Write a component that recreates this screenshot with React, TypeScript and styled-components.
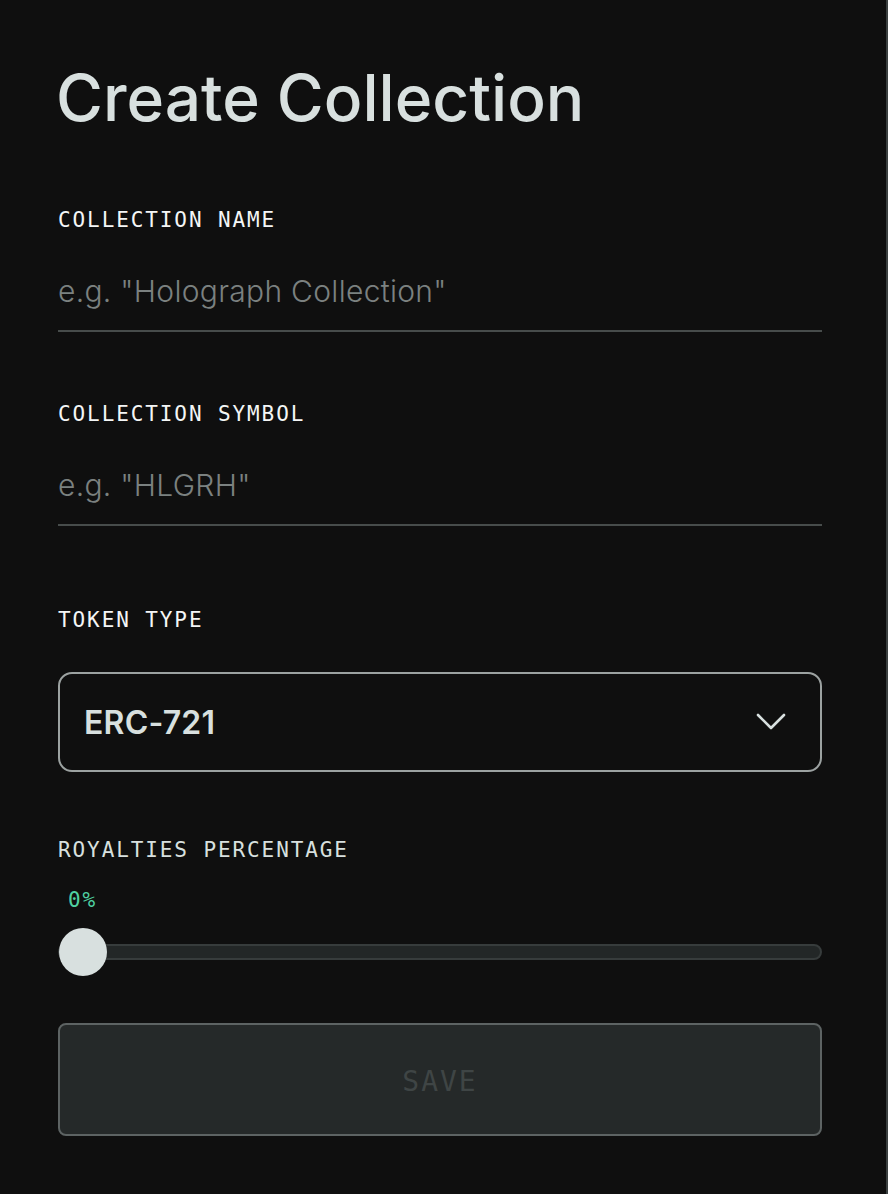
import React, { useState } from 'react'
import styled, { createGlobalStyle } from 'styled-components'

const GlobalStyle = createGlobalStyle`
  html, body {
    margin: 0;
    padding: 0;
    background: #0f0f0f;
  }
  * {
    box-sizing: border-box;
  }
`

const Page = styled.div`
  min-height: 1194px;
  background: #0f0f0f;
  border-right: 2px solid #3b4040;
  padding: 66px 64px 40px 58px;
  display: flex;
  flex-direction: column;
`

const Title = styled.h1`
  margin: 0 0 0 -2px;
  font-family: Inter, 'Liberation Sans', sans-serif;
  font-size: 64px;
  line-height: 64px;
  font-weight: 500;
  letter-spacing: 0;
  color: #d8e0df;
`

const Field = styled.div<{ $top: number }>`
  display: flex;
  flex-direction: column;
  margin-top: ${(p) => p.$top}px;
`

const Label = styled.label<{ $muted?: boolean }>`
  font-family: 'DejaVu Sans Mono', 'Liberation Mono', monospace;
  font-size: 21px;
  line-height: 24px;
  letter-spacing: 1.9px;
  color: ${(p) => (p.$muted ? '#d8e0df' : '#f4f6f6')};
`

const TextInput = styled.input`
  margin-top: 41px;
  background: transparent;
  border: none;
  border-bottom: 2px solid #474c4b;
  padding: 0 0 21px 0;
  font-family: Inter, 'Liberation Sans', sans-serif;
  font-size: 30px;
  line-height: 36px;
  font-weight: 300;
  letter-spacing: 0.3px;
  color: #d8e0df;
  outline: none;
  &::placeholder {
    color: #7b8180;
  }
`

const SelectBox = styled.div`
  margin-top: 40px;
  height: 100px;
  border: 2px solid #9ca2a1;
  border-radius: 14px;
  display: flex;
  align-items: center;
  justify-content: space-between;
  padding: 0 34px 0 24px;
  cursor: pointer;
`

const SelectValue = styled.span`
  font-family: Inter, 'Liberation Sans', sans-serif;
  font-size: 32px;
  font-weight: 600;
  letter-spacing: 0.2px;
  color: #d8e0df;
`

const Percent = styled.span`
  margin: 26px 0 0 10px;
  font-family: 'DejaVu Sans Mono', 'Liberation Mono', monospace;
  font-size: 21px;
  line-height: 24px;
  letter-spacing: 1.9px;
  color: #4fd1a2;
`

const SliderWrap = styled.div`
  position: relative;
  margin-top: 16px;
  height: 48px;
  display: flex;
  align-items: center;
`

const Track = styled.div`
  flex: 1;
  height: 16px;
  border-radius: 8px;
  background: #232727;
  border: 2px solid #373c3c;
`

const Thumb = styled.div`
  position: absolute;
  top: 0;
  width: 48px;
  height: 48px;
  border-radius: 50%;
  background: #d8e0df;
`

const SaveButton = styled.button`
  margin-top: 47px;
  height: 113px;
  padding-top: 4px;
  background: #252929;
  border: 2px solid #5d6363;
  border-radius: 8px;
  font-family: 'DejaVu Sans Mono', 'Liberation Mono', monospace;
  font-size: 28px;
  letter-spacing: 2px;
  color: #3f4545;
  cursor: not-allowed;
`

const Chevron = () => (
  <svg width="30" height="18" viewBox="0 0 30 18" fill="none">
    <path d="M2 2 L15 15 L28 2" stroke="#d8e0df" strokeWidth="2.6" strokeLinecap="round" strokeLinejoin="round" />
  </svg>
)

export default function App() {
  const [name, setName] = useState('')
  const [symbol, setSymbol] = useState('')
  const royalty = 0

  return (
    <>
      <GlobalStyle />
      <Page>
        <Title>Create Collection</Title>

        <Field $top={78}>
          <Label>COLLECTION NAME</Label>
          <TextInput
            value={name}
            onChange={(e) => setName(e.target.value)}
            placeholder='e.g. "Holograph Collection"'
          />
        </Field>

        <Field $top={70}>
          <Label>COLLECTION SYMBOL</Label>
          <TextInput
            value={symbol}
            onChange={(e) => setSymbol(e.target.value)}
            placeholder='e.g. "HLGRH"'
          />
        </Field>

        <Field $top={82}>
          <Label>TOKEN TYPE</Label>
          <SelectBox>
            <SelectValue>ERC-721</SelectValue>
            <Chevron />
          </SelectBox>
        </Field>

        <Field $top={66}>
          <Label $muted>ROYALTIES PERCENTAGE</Label>
          <Percent>{royalty}%</Percent>
          <SliderWrap>
            <Track />
            <Thumb style={{ left: `calc(${royalty}% + 1px)` }} />
          </SliderWrap>
        </Field>

        <SaveButton disabled>SAVE</SaveButton>
      </Page>
    </>
  )
}
